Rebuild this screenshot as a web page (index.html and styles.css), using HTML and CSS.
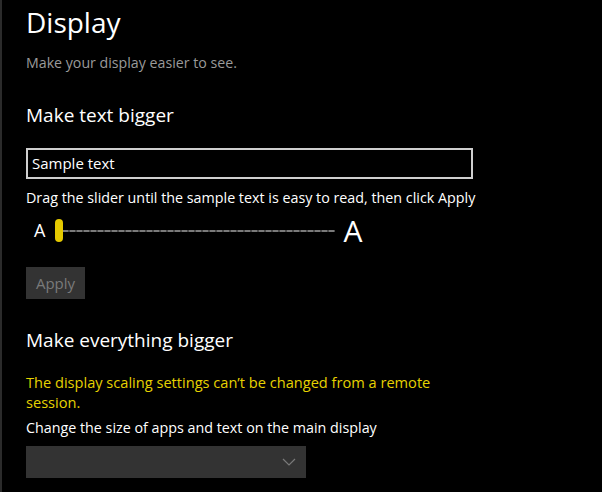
FILE: index.html
```html
<!DOCTYPE html>
<html lang="en">
<head>
<meta charset="utf-8">
<title>Display</title>
<link rel="stylesheet" href="styles.css">
</head>
<body>
<div class="page">
  <h1 class="title">Display</h1>
  <p class="subtitle">Make your display easier to see.</p>

  <h2 class="section">Make text bigger</h2>
  <div class="sample-box">Sample text</div>
  <p class="hint">Drag the slider until the sample text is easy to read, then click Apply</p>
  <div class="slider-row">
    <span class="a-small">A</span>
    <div class="slider">
      <div class="track"></div>
      <div class="thumb"></div>
    </div>
    <span class="a-big">A</span>
  </div>
  <button class="apply" disabled>Apply</button>

  <h2 class="section section-2">Make everything bigger</h2>
  <p class="warning">The display scaling settings can’t be changed from a remote session.</p>
  <p class="label">Change the size of apps and text on the main display</p>
  <div class="dropdown">
    <svg class="chevron" width="14" height="8" viewBox="0 0 14 8"><path d="M1 1 L7 7 L13 1" fill="none" stroke="#7a7a7a" stroke-width="1.2"/></svg>
  </div>
</div>
</body>
</html>
```

FILE: styles.css
```css
html, body {
  margin: 0;
  padding: 0;
  background: #000;
}
body {
  font-family: "Open Sans", "Noto Sans", sans-serif;
  color: #fff;
}
.page {
  border-left: 2px solid #2b2b2b;
  min-height: 492px;
  box-sizing: border-box;
  padding: 4px 0 0 24px;
}
.title {
  margin: 0;
  font-size: 28px;
  line-height: 36px;
  font-weight: 400;
}
.subtitle {
  margin: 13px 0 0;
  font-size: 14.2px;
  line-height: 20px;
  color: #9a9a9a;
}
.section {
  margin: 28px 0 0;
  font-size: 19px;
  line-height: 28px;
  font-weight: 400;
}
.section-2 {
  margin-top: 27px;
}
.sample-box {
  margin-top: 19px;
  width: 447px;
  height: 31px;
  box-sizing: border-box;
  border: 2px solid #cfcfcf;
  padding: 0 4px;
  font-size: 15px;
  line-height: 27px;
}
.hint {
  margin: 9px 0 0;
  font-size: 14.3px;
  line-height: 20px;
}
.slider-row {
  margin-top: 11px;
  height: 23px;
  display: flex;
  align-items: center;
}
.a-small {
  margin-left: 8px;
  font-size: 18px;
  line-height: 23px;
}
.slider {
  position: relative;
  margin-left: 10px;
  width: 280px;
  height: 23px;
}
.track {
  position: absolute;
  left: 8px;
  right: 0;
  top: 11px;
  height: 2px;
  background: repeating-linear-gradient(90deg, #7a7a7a 0 5px, #4a4a4a 5px 7px);
}
.thumb {
  position: absolute;
  left: 0;
  top: 0;
  width: 8px;
  height: 23px;
  border-radius: 4px;
  background-color: #ffe400;
  background-image: radial-gradient(circle, #d6bb00 0.6px, transparent 0.9px);
  background-size: 2px 2px;
}
.a-big {
  margin-left: 8px;
  font-size: 30px;
  line-height: 23px;
}
.apply {
  display: block;
  margin-top: 25px;
  width: 59px;
  height: 32px;
  border: none;
  padding: 0;
  background: #333;
  color: #7a7a7a;
  font-family: inherit;
  font-size: 15px;
}
.warning {
  margin: 18px 0 0;
  width: 425px;
  font-size: 14.6px;
  line-height: 20px;
  color: #e6d200;
}
.label {
  margin: 6px 0 0;
  font-size: 14.3px;
  line-height: 20px;
}
.dropdown {
  margin-top: 8px;
  width: 280px;
  height: 32px;
  background: #333;
  display: flex;
  align-items: center;
  justify-content: flex-end;
  padding-right: 10px;
  box-sizing: border-box;
}
.chevron {
  display: block;
}
```
